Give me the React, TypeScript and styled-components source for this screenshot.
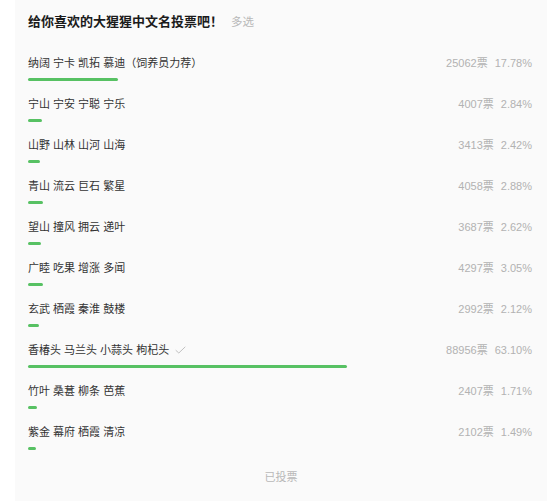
import React from 'react';
import styled, { createGlobalStyle } from 'styled-components';

const GlobalStyle = createGlobalStyle`
  html, body {
    margin: 0;
    padding: 0;
    background: #ffffff;
  }

  body {
    font-family: 'Liberation Sans', 'Noto Sans CJK SC', sans-serif;
    -webkit-font-smoothing: antialiased;
  }
`;

const Page = styled.div`
  display: flex;
  padding-left: 15px;
  min-height: 501px;
`;

const Card = styled.div`
  width: 532px;
  box-sizing: border-box;
  padding: 12px 13px 20px;
  background-color: #fafafa;
`;

const Header = styled.div`
  display: flex;
  align-items: center;
  gap: 8px;
  height: 20px;
  margin-bottom: 23px;
`;

const Title = styled.h2`
  margin: 0;
  font-size: 13px;
  line-height: 20px;
  font-weight: 700;
  color: #1b1b1b;
`;

const Multi = styled.span`
  font-size: 11.5px;
  line-height: 20px;
  color: #b8b8b8;
`;

const OptionList = styled.div`
  display: flex;
  flex-direction: column;
  width: 506px;
`;

const Option = styled.div`
  display: flex;
  flex-direction: column;
  padding-bottom: 15px;
`;

const OptionLine = styled.div`
  display: flex;
  align-items: center;
  justify-content: space-between;
  height: 16px;
  margin-bottom: 7px;
`;

const Label = styled.span`
  display: flex;
  align-items: center;
  gap: 6px;
  font-size: 11px;
  line-height: 16px;
  color: #333333;
  white-space: pre;
`;

const Stats = styled.span`
  display: flex;
  gap: 7px;
  padding-right: 2px;
  font-size: 11px;
  line-height: 16px;
  color: #b2b2b2;
`;

const Bar = styled.div`
  height: 3px;
  border-radius: 1.5px;
  background-color: #57c163;
`;

const Footer = styled.div`
  margin-top: 4px;
  text-align: center;
  font-size: 11px;
  line-height: 16px;
  color: #b8b8b8;
`;

const Check = () => (
  <svg width="11" height="8" viewBox="0 0 11 8" fill="none">
    <polyline points="0.7,4.2 3.8,7 10.3,0.8" stroke="#c0c0c0" strokeWidth="1" />
  </svg>
);

type Item = {
  name: string;
  votes: number;
  pct: number;
  chosen?: boolean;
};

const items: Item[] = [
  { name: '纳阔 宁卡 凯拓 慕迪（饲养员力荐）', votes: 25062, pct: 17.78 },
  { name: '宁山 宁安 宁聪 宁乐', votes: 4007, pct: 2.84 },
  { name: '山野 山林 山河 山海', votes: 3413, pct: 2.42 },
  { name: '青山 流云 巨石 繁星', votes: 4058, pct: 2.88 },
  { name: '望山 撞风 拥云 递叶', votes: 3687, pct: 2.62 },
  { name: '广睦 吃果 增涨 多闻', votes: 4297, pct: 3.05 },
  { name: '玄武 栖霞 秦淮 鼓楼', votes: 2992, pct: 2.12 },
  { name: '香椿头 马兰头 小蒜头 枸杞头', votes: 88956, pct: 63.1, chosen: true },
  { name: '竹叶 桑葚 柳条 芭蕉', votes: 2407, pct: 1.71 },
  { name: '紫金 幕府 栖霞 清凉', votes: 2102, pct: 1.49 },
];

export default function App() {
  return (
    <Page>
      <GlobalStyle />
      <Card>
        <Header>
          <Title>给你喜欢的大猩猩中文名投票吧！</Title>
          <Multi>多选</Multi>
        </Header>
        <OptionList>
          {items.map((item) => (
            <Option key={item.name}>
              <OptionLine>
                <Label>
                  {item.name}
                  {item.chosen && <Check />}
                </Label>
                <Stats>
                  <span>{item.votes}票</span>
                  <span>{item.pct.toFixed(2)}%</span>
                </Stats>
              </OptionLine>
              <Bar style={{ width: `${item.pct}%` }} />
            </Option>
          ))}
        </OptionList>
        <Footer>已投票</Footer>
      </Card>
    </Page>
  );
}
